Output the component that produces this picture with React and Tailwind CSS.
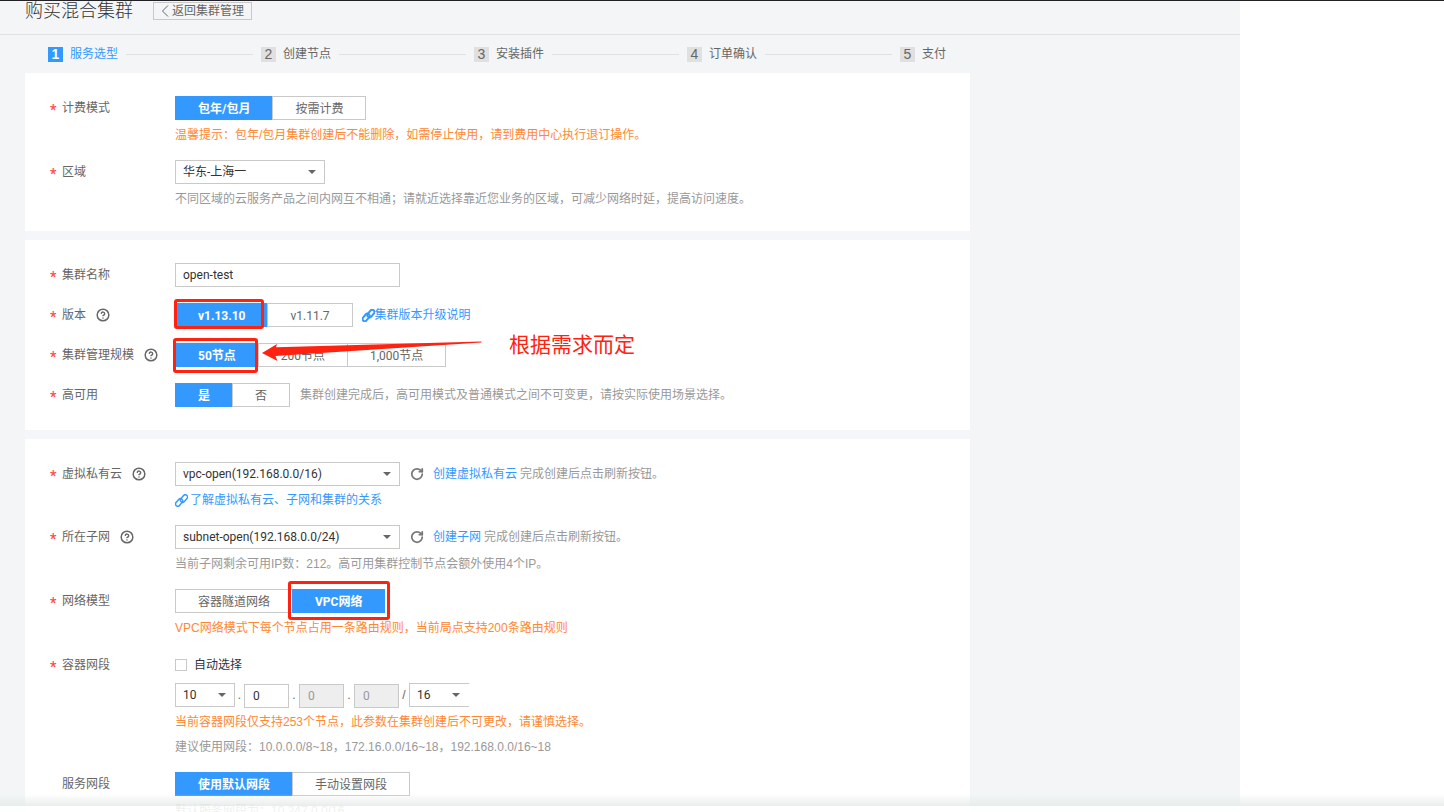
import { useState } from "react";
import { CircleHelp, RotateCw } from "lucide-react";

const steps = ["服务选型", "创建节点", "安装插件", "订单确认", "支付"];

function Card({ children }) {
  return (
    <section className="space-y-4 bg-white py-[23px] pr-6 pl-[25px]">{children}</section>
  );
}

function Row({ label, required = true, help, htmlFor, children }) {
  return (
    <div className="flex">
      <div className="flex h-6 w-[125px] shrink-0 items-center">
        <span className="w-3 pt-1 font-[Roboto,sans-serif] text-sm leading-4 font-bold text-[#ff4c4c]">
          {required ? "*" : ""}
        </span>
        <label htmlFor={htmlFor} className="text-[#666]">
          {label}
        </label>
        {help && (
          <button type="button" aria-label="帮助" className="ml-[10px] text-[#666]">
            <CircleHelp size={14} strokeWidth={2.5} />
          </button>
        )}
      </div>
      <div className="min-w-0 flex-1">{children}</div>
    </div>
  );
}

function Hint({ orange, className = "mt-[6px]", children }) {
  return (
    <p className={`leading-[18px] ${orange ? "text-[#ff8833]" : "text-[#999]"} ${className}`}>
      {children}
    </p>
  );
}

function ButtonGroup({ options, initial = 0 }) {
  const [active, setActive] = useState(initial);

  return (
    <div className="flex font-[Roboto,'Noto_Sans_CJK_SC',sans-serif]">
      {options.map((option, i) => (
        <button
          key={option}
          type="button"
          onClick={() => setActive(i)}
          className={`h-6 border px-[22px] pt-px leading-5 whitespace-nowrap ${
            i > 0 ? "-ml-px" : ""
          } ${
            active === i
              ? "border-[#3399ff] bg-[#3399ff] font-bold text-white"
              : "border-[#c9c9c9] bg-white text-[#666]"
          }`}
        >
          {option}
        </button>
      ))}
    </div>
  );
}

function Select({ id, label, options, className }) {
  return (
    <div className={`relative h-6 ${className}`}>
      <select
        id={id}
        aria-label={label}
        className="block h-6 w-full appearance-none border border-[#c9c9c9] bg-white pb-px pl-[7px] font-[Roboto,'Noto_Sans_CJK_SC',sans-serif] text-[#333] outline-none"
      >
        {options.map((option) => (
          <option key={option}>{option}</option>
        ))}
      </select>
      <svg
        viewBox="0 0 8 4"
        className="pointer-events-none absolute top-[10px] right-[9px] h-1 w-2 fill-[#666]"
      >
        <path d="M0 0h8L4 4z" />
      </svg>
    </div>
  );
}

function Octet({ label, value, disabled }) {
  return (
    <input
      type="text"
      aria-label={label}
      defaultValue={value}
      disabled={disabled}
      className="mt-px h-6 w-[45px] border border-[#c9c9c9] bg-white px-2 font-[Roboto,sans-serif] text-[#333] outline-none disabled:bg-[#eee] disabled:text-[#999]"
    />
  );
}

function Refresh({ link }) {
  return (
    <div className="flex items-center text-[#999]">
      <button type="button" aria-label="刷新" className="mr-[9px] ml-[10px] text-[#777]">
        <RotateCw size={14} strokeWidth={3} />
      </button>
      <a href="#" className="mr-[3px] text-[#3399ff]">
        {link}
      </a>
      完成创建后点击刷新按钮。
    </div>
  );
}

function ChainIcon({ strokeWidth, className = "" }) {
  return (
    <svg
      viewBox="0 0 16 16"
      strokeWidth={strokeWidth}
      className={`h-[13px] w-[13px] fill-none stroke-[#3399ff] ${className}`}
    >
      <g transform="rotate(-50 8 8)" strokeLinecap="round">
        <rect x="-1" y="4.5" width="10.5" height="5.5" rx="2.75" />
        <rect x="6.5" y="6" width="10.5" height="5.5" rx="2.75" />
      </g>
    </svg>
  );
}

// Red frame around an option
function Mark({ className }) {
  return (
    <span
      className={`pointer-events-none absolute rounded-[3px] border-3 border-[#ff2211] ${className}`}
    />
  );
}

export default function App() {
  return (
    <div className="relative h-screen overflow-hidden border-t border-[#222226] bg-white font-['Liberation_Sans','Noto_Sans_CJK_SC',sans-serif] text-xs text-[#666]">
      <main className="min-h-screen max-w-[1240px] bg-[#f3f5f7]">
        <header className="flex h-[34px] items-start border-b border-[#dfe1e3] pl-[25px]">
          <h1 className="text-lg leading-5 font-light text-[#333]">购买混合集群</h1>
          <button
            type="button"
            className="mt-px ml-5 flex h-[18px] items-center border border-[#c9c9c9] px-[7px] text-[#666]"
          >
            <svg viewBox="0 0 8 12" className="mr-[3px] h-3 w-2 fill-none stroke-[#666]">
              <path d="M7 0.5L1.5 6L7 11.5" />
            </svg>
            返回集群管理
          </button>
        </header>

        <div className="mr-[270px] ml-[25px]">
          <ol className="flex h-[38px] items-center bg-[#f3f5f7] pr-6 pl-[23px]">
            {steps.map((step, i) => (
              <li
                key={step}
                className={`flex items-center ${i < steps.length - 1 ? "flex-1" : ""}`}
              >
                <span
                  className={`mr-[7px] flex h-[15px] w-[15px] items-center justify-center text-sm ${
                    i === 0 ? "bg-[#3399ff] font-bold text-white" : "bg-[#e0e0e0] text-[#666]"
                  }`}
                >
                  {i + 1}
                </span>
                <span className={i === 0 ? "text-[#3399ff]" : "text-[#666]"}>{step}</span>
                {i < steps.length - 1 && <span className="mx-2 h-px flex-1 bg-[#dfe1e3]" />}
              </li>
            ))}
          </ol>

          <div className="space-y-[9px] bg-[#f5f6f9]">
            <Card>
              <Row label="计费模式">
                <ButtonGroup options={["包年/包月", "按需计费"]} />
                <Hint orange>
                  温馨提示：包年/包月集群创建后不能删除，如需停止使用，请到费用中心执行退订操作。
                </Hint>
              </Row>
              <Row label="区域" htmlFor="region">
                <Select id="region" options={["华东-上海一"]} className="w-[150px]" />
                <Hint>
                  不同区域的云服务产品之间内网互不相通；请就近选择靠近您业务的区域，可减少网络时延，提高访问速度。
                </Hint>
              </Row>
            </Card>

            <Card>
              <Row label="集群名称" htmlFor="name">
                <input
                  id="name"
                  type="text"
                  defaultValue="open-test"
                  className="block h-6 w-[225px] border border-[#c9c9c9] bg-white px-[7px] font-[Roboto,'Noto_Sans_CJK_SC',sans-serif] text-[#333] outline-none"
                />
              </Row>
              <Row label="版本" help>
                <div className="relative flex items-center">
                  <ButtonGroup options={["v1.13.10", "v1.11.7"]} />
                  <Mark className="-top-1 -left-px h-[30px] w-[90px]" />
                  <a href="#" className="ml-[9px] flex items-center text-[#3399ff]">
                    <ChainIcon strokeWidth={2.5} />
                    集群版本升级说明
                  </a>
                </div>
              </Row>
              <Row label="集群管理规模" help>
                <div className="relative">
                  <ButtonGroup options={["50节点", "200节点", "1,000节点"]} />
                  <Mark className="-top-[5px] -left-[2px] h-[35px] w-[85px]" />
                  <svg
                    viewBox="0 0 220 20"
                    className="pointer-events-none absolute -top-[2px] left-[87px] h-5 w-[220px] fill-[#ff2211]"
                  >
                    <path d="M0 12L15 3L14 6.3L219.5 0.6V1.6L13.5 15L15.5 20Z" />
                  </svg>
                  <p className="absolute -top-3 left-[334px] text-[21px] leading-7 text-[#ff2211]">
                    根据需求而定
                  </p>
                </div>
              </Row>
              <Row label="高可用">
                <div className="flex items-center">
                  <ButtonGroup options={["是", "否"]} />
                  <Hint className="ml-[10px]">
                    集群创建完成后，高可用模式及普通模式之间不可变更，请按实际使用场景选择。
                  </Hint>
                </div>
              </Row>
            </Card>

            <Card>
              <Row label="虚拟私有云" htmlFor="vpc" help>
                <div className="flex">
                  <Select id="vpc" options={["vpc-open(192.168.0.0/16)"]} className="w-[225px]" />
                  <Refresh link="创建虚拟私有云" />
                </div>
                <a href="#" className="mt-[5px] flex items-center leading-[18px] text-[#3399ff]">
                  <ChainIcon strokeWidth={1.75} className="mr-[2px]" />
                  了解虚拟私有云、子网和集群的关系
                </a>
              </Row>
              <Row label="所在子网" htmlFor="subnet" help>
                <div className="flex">
                  <Select
                    id="subnet"
                    options={["subnet-open(192.168.0.0/24)"]}
                    className="w-[225px]"
                  />
                  <Refresh link="创建子网" />
                </div>
                <Hint>当前子网剩余可用IP数：212。高可用集群控制节点会额外使用4个IP。</Hint>
              </Row>
              <Row label="网络模型">
                <div className="relative">
                  <ButtonGroup options={["容器隧道网络", "VPC网络"]} initial={1} />
                  <Mark className="-top-2 left-[113px] h-[39px] w-[102px]" />
                </div>
                <Hint orange>VPC网络模式下每个节点占用一条路由规则，当前局点支持200条路由规则</Hint>
              </Row>
              <Row label="容器网段">
                <div className="flex h-6 items-center">
                  <input
                    id="auto"
                    type="checkbox"
                    className="mr-[7px] h-3 w-3 appearance-none border border-[#c9c9c9] bg-white checked:bg-[#3399ff]"
                  />
                  <label htmlFor="auto" className="text-[#333]">
                    自动选择
                  </label>
                </div>
                <div className="mt-[6px] flex h-6">
                  <Select label="网段第一段" options={["10"]} className="w-[60px]" />
                  <span className="w-[9px] text-center leading-6">.</span>
                  <Octet label="网段第二段" value="0" />
                  <span className="w-[10px] text-center leading-6">.</span>
                  <Octet label="网段第三段" value="0" disabled />
                  <span className="w-[10px] text-center leading-6">.</span>
                  <Octet label="网段第四段" value="0" disabled />
                  <span className="w-[10px] text-center leading-6">/</span>
                  <Select
                    label="掩码"
                    options={["16"]}
                    className="w-[60px] [&>select]:border-r-0"
                  />
                </div>
                <Hint orange>
                  当前容器网段仅支持253个节点，此参数在集群创建后不可更改，请谨慎选择。
                </Hint>
                <Hint className="mt-[7px]">
                  建议使用网段：10.0.0.0/8~18，172.16.0.0/16~18，192.168.0.0/16~18
                </Hint>
              </Row>
              <Row label="服务网段" required={false}>
                <ButtonGroup options={["使用默认网段", "手动设置网段"]} />
                <Hint>默认服务网段为：10.247.0.0/16</Hint>
              </Row>
            </Card>
          </div>
        </div>
      </main>

      {/* Fade over the bottom edge of the page */}
      <div className="pointer-events-none absolute inset-x-0 bottom-0">
        <div className="h-3 bg-linear-to-b from-[#e8edeb]/0 to-[#e8edeb]" />
        <div className="h-[6px] bg-white/85" />
      </div>
    </div>
  );
}
